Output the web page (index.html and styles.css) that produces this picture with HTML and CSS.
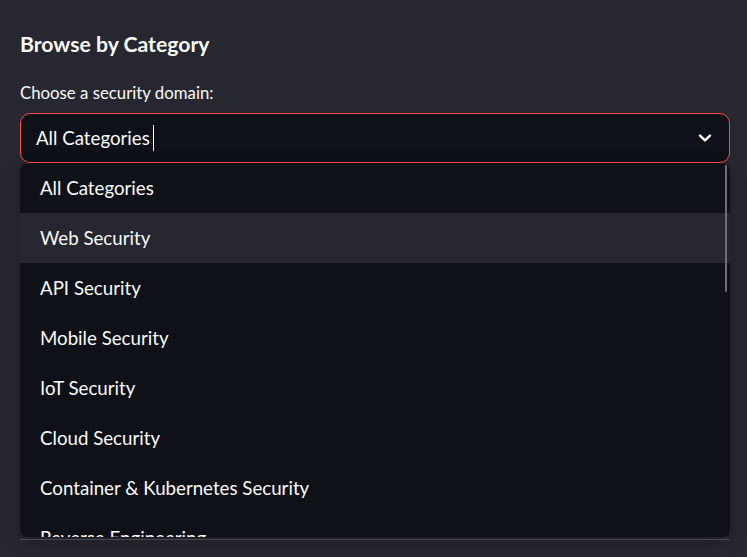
FILE: index.html
```html
<!DOCTYPE html>
<html lang="en">
<head>
<meta charset="utf-8">
<title>Browse by Category</title>
<link rel="stylesheet" href="styles.css">
</head>
<body>
<main class="page">
  <h3 class="title">Browse by Category</h3>
  <label class="label">Choose a security domain:</label>
  <div class="select-wrap">
    <div class="select">
      <span class="value">All Categories</span><span class="caret"></span>
      <svg class="chevron" viewBox="0 0 16 16" width="16" height="16" aria-hidden="true">
        <path d="M3 5.6 L8 10.4 L13 5.6" fill="none" stroke="#fafafa" stroke-width="2.4" stroke-linecap="round" stroke-linejoin="round"/>
      </svg>
    </div>
    <ul class="menu">
      <li class="option">All Categories</li>
      <li class="option hover">Web Security</li>
      <li class="option">API Security</li>
      <li class="option">Mobile Security</li>
      <li class="option">IoT Security</li>
      <li class="option">Cloud Security</li>
      <li class="option">Container &amp; Kubernetes Security</li>
      <li class="option">Reverse Engineering</li>
      <div class="scrollbar"></div>
    </ul>
  </div>
  <div class="under"></div>
  <hr class="divider">
</main>
</body>
</html>
```

FILE: styles.css
```css
html, body {
  margin: 0;
  padding: 0;
  background: #262730;
}
body {
  font-family: Lato, "Noto Sans", sans-serif;
  color: #fafafa;
  width: 747px;
  height: 557px;
  overflow: hidden;
}
.page {
  padding: 31px 17px 0 20px;
}
.title {
  margin: 0;
  font-size: 21.2px;
  line-height: 26px;
  font-weight: 700;
}
.label {
  display: block;
  margin-top: 26px;
  font-size: 16.8px;
  line-height: 20px;
}
.select-wrap {
  position: relative;
  margin-top: 10px;
}
.select {
  display: flex;
  align-items: center;
  height: 48px;
  border: 1px solid #ff4b4b;
  border-radius: 10px;
  background: #0e1117;
  padding: 0 16px 0 15px;
}
.value {
  font-size: 18.7px;
  line-height: 24px;
}
.caret {
  display: inline-block;
  width: 1px;
  height: 26px;
  background: #fafafa;
  margin-left: 3px;
}
.chevron {
  margin-left: auto;
  display: block;
}
.menu {
  position: absolute;
  top: 50px;
  left: 0;
  right: 0;
  height: 374px;
  margin: 0;
  padding: 0;
  list-style: none;
  background: #0e1117;
  border-radius: 8px;
  overflow: hidden;
  box-shadow: 0 4px 16px rgba(0, 0, 0, 0.25);
  z-index: 2;
}
.option {
  height: 50px;
  display: flex;
  align-items: center;
  padding-left: 20px;
  font-size: 18.7px;
  line-height: 24px;
}
.option.hover {
  background: #262730;
}
.scrollbar {
  position: absolute;
  top: 2px;
  right: 3px;
  width: 2px;
  height: 127px;
  border-radius: 1px;
  background: #6e6e72;
}
.under {
  height: 376px;
}
.divider {
  margin: 0;
  border: 0;
  border-top: 1px solid #55565e;
}
```
